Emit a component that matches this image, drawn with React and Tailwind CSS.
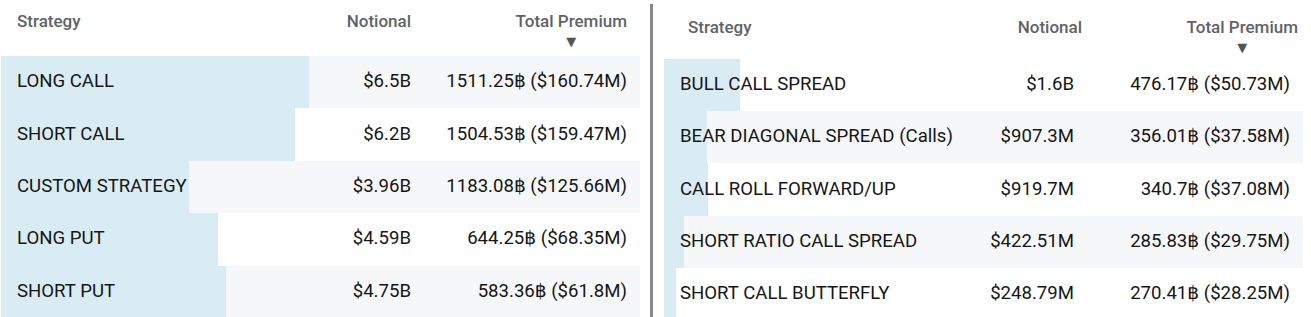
import React from 'react'

const MAX = 6.5

const left = [
  { name: 'LONG CALL', notional: '$6.5B', n: 6.5, premium: '1511.25฿ ($160.74M)' },
  { name: 'SHORT CALL', notional: '$6.2B', n: 6.2, premium: '1504.53฿ ($159.47M)' },
  { name: 'CUSTOM STRATEGY', notional: '$3.96B', n: 3.96, premium: '1183.08฿ ($125.66M)' },
  { name: 'LONG PUT', notional: '$4.59B', n: 4.59, premium: '644.25฿ ($68.35M)' },
  { name: 'SHORT PUT', notional: '$4.75B', n: 4.75, premium: '583.36฿ ($61.8M)' },
]

const right = [
  { name: 'BULL CALL SPREAD', notional: '$1.6B', n: 1.6, premium: '476.17฿ ($50.73M)' },
  { name: 'BEAR DIAGONAL SPREAD (Calls)', notional: '$907.3M', n: 0.9073, premium: '356.01฿ ($37.58M)' },
  { name: 'CALL ROLL FORWARD/UP', notional: '$919.7M', n: 0.9197, premium: '340.7฿ ($37.08M)' },
  { name: 'SHORT RATIO CALL SPREAD', notional: '$422.51M', n: 0.42251, premium: '285.83฿ ($29.75M)' },
  { name: 'SHORT CALL BUTTERFLY', notional: '$248.79M', n: 0.24879, premium: '270.41฿ ($28.25M)' },
]

function Header({ shifted }) {
  return (
    <div
      className={
        'flex h-[56px] text-[17px] font-medium text-[#5f6368] ' +
        (shifted ? 'ml-[8px] pt-[12px]' : 'pt-[9px]')
      }
    >
      <div className="w-[290px] pl-4 leading-[24px]">Strategy</div>
      <div className="w-[120px] text-right leading-[24px]">Notional</div>
      <div className="flex w-[216px] justify-end">
        <div className="flex flex-col items-center">
          <span className="leading-[24px]">Total Premium</span>
          <span className="mt-[1px] text-[13px] leading-[16px] text-[#555]">▼</span>
        </div>
      </div>
    </div>
  )
}

function Table({ rows, stripeOdd, shifted }) {
  return (
    <div className="w-[639px]">
      <Header shifted={shifted} />
      {rows.map((r, i) => {
        const striped = stripeOdd ? i % 2 === 0 : i % 2 === 1
        return (
          <div
            key={r.name}
            className={'relative flex h-[52.4px] items-center text-[18.6px] text-[#161616] ' + (striped ? 'bg-[#f5f7f9]' : 'bg-white')}
          >
            <div className="absolute inset-y-0 left-0 bg-[#d9ecf3]" style={{ width: `${(r.n / MAX) * 308}px` }} />
            <div className="relative w-[290px] whitespace-nowrap pl-4">{r.name}</div>
            <div className="relative w-[120px] text-right">{r.notional}</div>
            <div className="relative w-[216px] whitespace-nowrap text-right">{r.premium}</div>
          </div>
        )
      })}
    </div>
  )
}

export default function App() {
  return (
    <div className="flex h-[317px] w-[1311px] overflow-hidden bg-white" style={{ fontFamily: 'Roboto, "DejaVu Sans", sans-serif' }}>
      <div className="pl-[1px]">
        <Table rows={left} stripeOdd />
      </div>
      <div className="ml-[10px] mt-[4px] w-[3px] bg-[#888888]" />
      <div className="ml-[11px] mt-[2.5px]">
        <Table rows={right} shifted />
      </div>
    </div>
  )
}
